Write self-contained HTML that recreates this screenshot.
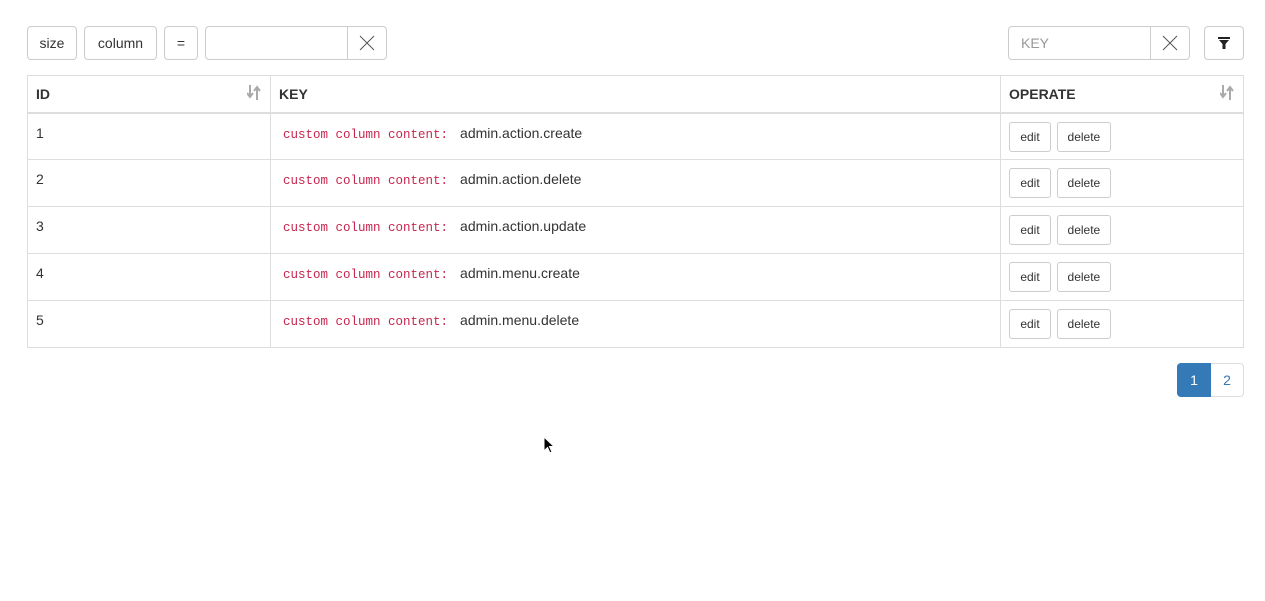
<!DOCTYPE html>
<html><head><style>
*{box-sizing:border-box}
body{margin:0;background:#fff;font-family:"Liberation Sans",Arial,sans-serif;font-size:14px;color:#333;width:1265px;height:601px;position:relative;overflow:hidden}
.b{position:absolute;border:1px solid #ccc;border-radius:4px;background:#fff;display:flex;align-items:center;justify-content:center;font-size:14px;color:#333}
.inp{position:absolute;border:1px solid #ccc;border-radius:4px;background:#fff}
.x{position:absolute;right:0;top:0;bottom:0;width:39px;border-left:1px solid #ccc;display:flex;align-items:center;justify-content:center}
table{position:absolute;left:27px;top:75px;width:1217px;border-collapse:collapse}
td,th{border:1px solid #ddd;vertical-align:top;text-align:left;padding:0 8px}
th{height:37px;border-bottom:2px solid #ddd;font-weight:bold;vertical-align:middle;position:relative}
td{height:47px;padding-top:11px}
code{font-family:"Liberation Mono",monospace;font-size:12.5px;color:#c7254e;padding:0 4px;margin-right:8px}
.sb{display:inline-block;border:1px solid #ccc;border-radius:3px;font-size:12px;padding:0;height:30px;line-height:28px;margin-top:-3px;margin-right:2px;text-align:center;vertical-align:top}
.srt{position:absolute;right:9px;top:9px}
</style></head><body>
<div class="b" style="left:27px;top:26px;width:50px;height:34px">size</div>
<div class="b" style="left:84px;top:26px;width:73px;height:34px">column</div>
<div class="b" style="left:164px;top:26px;width:34px;height:34px">=</div>
<div class="inp" style="left:205px;top:26px;width:182px;height:34px"><div class="x"><svg width="16" height="16"><path d="M1 1L15 15M15 1L1 15" stroke="#555" stroke-width="1"/></svg></div></div>
<div class="inp" style="left:1008px;top:26px;width:182px;height:34px"><span style="position:absolute;left:12px;top:8px;color:#999">KEY</span><div class="x"><svg width="16" height="16"><path d="M1 1L15 15M15 1L1 15" stroke="#555" stroke-width="1"/></svg></div></div>
<div class="b" style="left:1204px;top:26px;width:40px;height:34px"><svg width="12" height="12"><path d="M0 0H12V2H0ZM1 3H11L7.5 7V12H4.5V7Z" fill="#222"/></svg></div>
<table>
<tr><th style="width:243px">ID<svg class="srt" width="14" height="15"><path d="M3 0V11M0 8L3 12L6 8M10 15V3M7 6L10 2L13 6" stroke="#aaa" stroke-width="2" fill="none"/></svg></th><th style="width:730px">KEY</th><th>OPERATE<svg class="srt" width="14" height="15"><path d="M3 0V11M0 8L3 12L6 8M10 15V3M7 6L10 2L13 6" stroke="#aaa" stroke-width="2" fill="none"/></svg></th></tr>
<tr><td>1</td><td><code>custom column content:</code>admin.action.create</td><td><span class="sb" style="width:42px">edit</span> <span class="sb" style="width:54px">delete</span></td></tr>
<tr><td>2</td><td><code>custom column content:</code>admin.action.delete</td><td><span class="sb" style="width:42px">edit</span> <span class="sb" style="width:54px">delete</span></td></tr>
<tr><td>3</td><td><code>custom column content:</code>admin.action.update</td><td><span class="sb" style="width:42px">edit</span> <span class="sb" style="width:54px">delete</span></td></tr>
<tr><td>4</td><td><code>custom column content:</code>admin.menu.create</td><td><span class="sb" style="width:42px">edit</span> <span class="sb" style="width:54px">delete</span></td></tr>
<tr><td>5</td><td><code>custom column content:</code>admin.menu.delete</td><td><span class="sb" style="width:42px">edit</span> <span class="sb" style="width:54px">delete</span></td></tr>
</table>
<div style="position:absolute;left:1177px;top:363px;width:34px;height:34px;background:#337ab7;color:#fff;border-radius:4px 0 0 4px;display:flex;align-items:center;justify-content:center">1</div>
<div style="position:absolute;left:1211px;top:363px;width:33px;height:34px;border:1px solid #ddd;border-left:none;color:#337ab7;border-radius:0 4px 4px 0;display:flex;align-items:center;justify-content:center">2</div>
<svg style="position:absolute;left:543px;top:436px" width="12" height="18"><path d="M1 1V15L4.5 11.5L7 17L9 16L6.5 10.5H11Z" fill="#000" stroke="#fff" stroke-width="1"/></svg>
</body></html>
